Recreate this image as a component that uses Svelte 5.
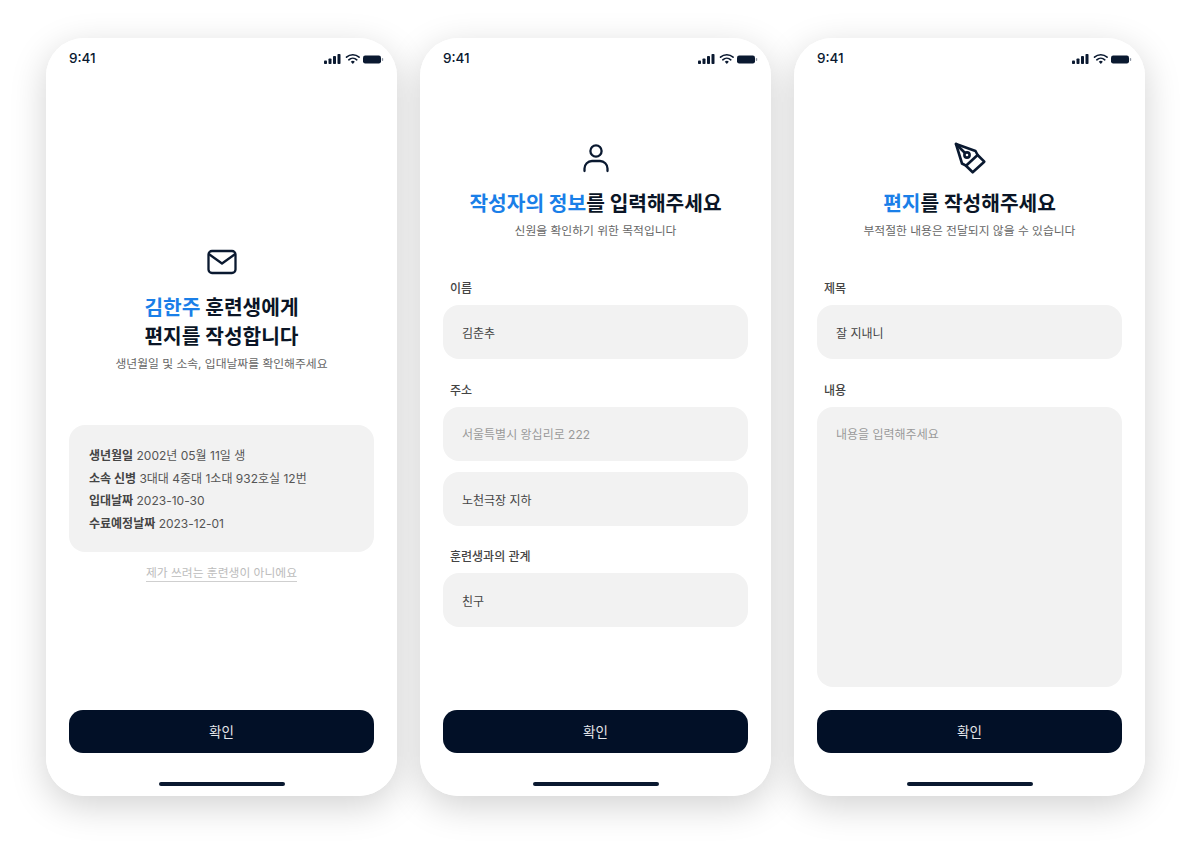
<script>
  const memberInfo = [
    ["생년월일", "2002년 05월 11일 생"],
    ["소속 신병", "3대대 4중대 1소대 932호실 12번"],
    ["입대날짜", "2023-10-30"],
    ["수료예정날짜", "2023-12-01"],
  ];
</script>

{#snippet statusBar()}
  <div class="status">
    <span class="time">9:41</span>
    <svg width="60" height="12" viewBox="0 0 60 12" fill="#0a1930">
      <rect x="0" y="7.5" width="3" height="3.5" rx="0.8" />
      <rect x="4.5" y="5.5" width="3" height="5.5" rx="0.8" />
      <rect x="9" y="3" width="3" height="8" rx="0.8" />
      <rect x="13.5" y="1" width="3" height="10" rx="0.8" />
      <path d="M22.5 4.2a9.5 9.5 0 0 1 12.6 0M24.8 6.8a6 6 0 0 1 8 0" fill="none" stroke="#0a1930" stroke-width="1.6" stroke-linecap="round" />
      <path d="M26.8 8.8a2.9 2.9 0 0 1 4 0L28.8 11z" />
      <rect x="39" y="2.5" width="18" height="8" rx="2.2" />
      <rect x="57.8" y="5" width="1.4" height="3" rx="0.7" fill="#8b93a0" />
    </svg>
  </div>
{/snippet}

{#snippet footer()}
  <button class="confirm">확인</button>
  <div class="home"></div>
{/snippet}

<div class="row">
  <section class="phone">
    {@render statusBar()}
    <div class="main first">
      <svg class="icon" viewBox="0 0 30 30" fill="none" stroke="#0a1930" stroke-width="2.3" stroke-linejoin="round" stroke-linecap="round">
        <rect x="1.5" y="4" width="27" height="22" rx="3.5" />
        <path d="M2.5 7.5l12.5 9 12.5-9" />
      </svg>
      <h2><em>김한주</em> 훈련생에게<br />편지를 작성합니다</h2>
      <p class="sub">생년월일 및 소속, 입대날짜를 확인해주세요</p>
      <div class="card">
        {#each memberInfo as [key, value]}
          <div><b>{key}</b> {value}</div>
        {/each}
      </div>
      <a class="notme" href="#top">제가 쓰려는 훈련생이 아니에요</a>
    </div>
    {@render footer()}
  </section>

  <section class="phone">
    {@render statusBar()}
    <div class="main">
      <svg class="icon" viewBox="0 0 30 30" fill="none" stroke="#0a1930" stroke-width="2.3" stroke-linecap="round">
        <circle cx="15" cy="8" r="5.6" />
        <path d="M3.5 28v-2.5a7.5 7.5 0 0 1 7.5-7.5h8a7.5 7.5 0 0 1 7.5 7.5V28" />
      </svg>
      <h2><em>작성자의 정보</em>를 입력해주세요</h2>
      <p class="sub">신원을 확인하기 위한 목적입니다</p>
      <div class="form">
        <label class="label" for="name">이름</label>
        <input id="name" value="김춘추" readonly />
        <label class="label gap" for="addr">주소</label>
        <input id="addr" placeholder="서울특별시 왕십리로 222" readonly />
        <input class="next" value="노천극장 지하" readonly />
        <label class="label gap" for="rel">훈련생과의 관계</label>
        <input id="rel" value="친구" readonly />
      </div>
    </div>
    {@render footer()}
  </section>

  <section class="phone">
    {@render statusBar()}
    <div class="main">
      <svg class="icon" viewBox="0 0 30 30" fill="none" stroke="#0a1930" stroke-width="2.6" stroke-linejoin="round" stroke-linecap="round">
        <path d="M1 1L20.5 8L22.6 12L11 22.7L7 20.5Z" />
        <path d="M22.6 12L29.3 18.7L17.7 29.3L11 22.7" />
        <path d="M1 1L9.5 9.5" />
        <circle cx="12" cy="12" r="2.6" />
      </svg>
      <h2><em>편지</em>를 작성해주세요</h2>
      <p class="sub">부적절한 내용은 전달되지 않을 수 있습니다</p>
      <div class="form">
        <label class="label" for="title">제목</label>
        <input id="title" value="잘 지내니" readonly />
        <label class="label gap" for="body">내용</label>
        <textarea id="body" placeholder="내용을 입력해주세요" readonly></textarea>
      </div>
    </div>
    {@render footer()}
  </section>
</div>

<style>
  :global(body) {
    background: #fff;
  }

  .row {
    display: flex;
    gap: 23px;
    height: 857px;
    box-sizing: border-box;
    padding: 38px 0 0 46px;
    isolation: isolate;
    overflow: hidden;
    font-family: Inter, "Noto Sans CJK KR", sans-serif;
  }

  .phone {
    position: relative;
    width: 351px;
    height: 758px;
    display: flex;
    flex-direction: column;
    background: #fff;
    border-radius: 38px;
  }

  .phone::before {
    content: "";
    position: absolute;
    inset: 0;
    z-index: -1;
    border-radius: 38px;
    box-shadow: 0 10px 36px rgba(0, 0, 0, 0.18);
  }

  .status {
    height: 40px;
    flex: none;
    display: flex;
    justify-content: space-between;
    align-items: flex-end;
    padding: 0 13px 12px 23px;
    box-sizing: border-box;
  }

  .status svg {
    margin-bottom: 1px;
  }

  .time {
    font-size: 13.5px;
    line-height: 16px;
    font-weight: 500;
    color: #0a1930;
  }

  .main {
    flex: 1;
    display: flex;
    flex-direction: column;
    align-items: center;
    padding: 65px 23px 0;
  }

  .main.first {
    padding-top: 169px;
  }

  .icon {
    width: 30px;
    height: 30px;
    overflow: visible;
    margin-bottom: 16px;
    flex: none;
  }

  h2 {
    margin: 0;
    font-size: 20.3px;
    line-height: 29px;
    font-weight: 700;
    color: #0a1526;
    text-align: center;
  }

  h2 em {
    font-style: normal;
    color: #1a7fe8;
  }

  .sub {
    margin: 4px 0 0;
    font-size: 11.8px;
    line-height: 18px;
    color: #666;
    text-align: center;
  }

  .card {
    align-self: stretch;
    box-sizing: border-box;
    height: 127px;
    margin-top: 52px;
    padding: 20px 20px;
    background: #f2f2f2;
    border-radius: 16px;
    font-size: 12px;
    line-height: 22.7px;
    color: #555;
  }

  .card b {
    font-weight: 700;
    color: #444;
  }

  .notme {
    margin-top: 14px;
    font-size: 11.8px;
    line-height: 15px;
    color: #bcbcbc;
    text-decoration: none;
    border-bottom: 1px solid #cfcfcf;
  }

  .form {
    align-self: stretch;
    display: flex;
    flex-direction: column;
    margin-top: 41px;
  }

  .label {
    padding-left: 7px;
    margin-bottom: 8px;
    font-size: 12px;
    line-height: 16px;
    font-weight: 500;
    color: #444;
  }

  .label.gap {
    margin-top: 24px;
  }

  .next + .label.gap {
    margin-top: 23px;
  }

  input,
  textarea {
    display: block;
    box-sizing: border-box;
    width: 100%;
    margin: 0;
    padding: 0 19px;
    height: 54px;
    flex: none;
    border: none;
    outline: none;
    background: #f2f2f2;
    border-radius: 16px;
    font: inherit;
    font-size: 12px;
    line-height: 52px;
    color: #444;
  }

  textarea {
    height: 280px;
    padding-top: 19px;
    resize: none;
    line-height: 18px;
  }

  input::placeholder,
  textarea::placeholder {
    color: #9a9a9a;
    opacity: 1;
  }

  .next {
    margin-top: 11px;
  }

  .confirm {
    flex: none;
    margin: 0 23px;
    height: 43px;
    padding: 0 0 2px;
    border: none;
    border-radius: 14px;
    background: #021027;
    color: #e4e6ea;
    font: inherit;
    font-size: 13.5px;
  }

  .home {
    flex: none;
    width: 126px;
    height: 4px;
    margin: 29px auto 10px;
    border-radius: 2px;
    background: #0a1930;
  }
</style>
